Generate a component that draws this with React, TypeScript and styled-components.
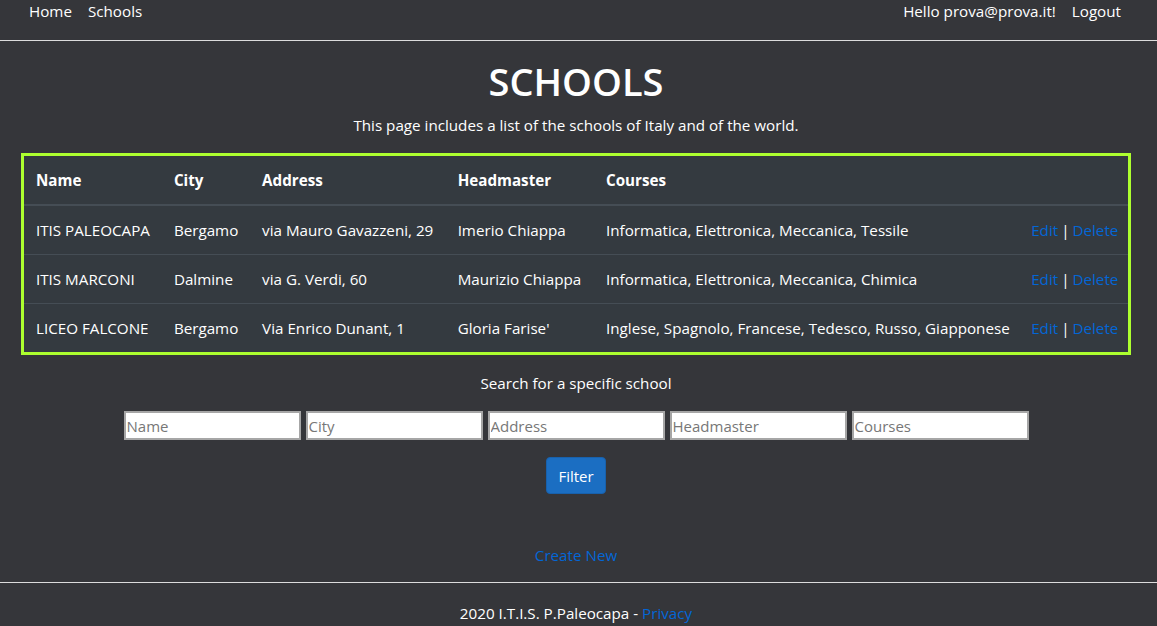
import React from "react";
import styled, { createGlobalStyle } from "styled-components";

const GlobalStyle = createGlobalStyle`
  html, body { margin: 0; padding: 0; }
  body {
    background: #35363a;
    color: #ffffff;
    font-family: "Open Sans", "Noto Sans", sans-serif;
    font-size: 15.2px;
    line-height: 24px;
    overflow: hidden;
  }
  * { box-sizing: border-box; }
`;

const Page = styled.div`
  display: flex;
  flex-direction: column;
  min-height: 626px;
`;

const Nav = styled.header`
  height: 42px;
  border-bottom: 1px solid #dcdcdc;
  display: flex;
  justify-content: space-between;
  align-items: flex-start;
  padding: 0 28px 0 21px;
  margin-top: -1px;
`;

const NavGroup = styled.nav`
  display: flex;
  gap: 0;
`;

const NavLink = styled.a`
  color: #ffffff;
  text-decoration: none;
  padding: 0 8px;
  line-height: 24px;
`;

const Main = styled.main`
  width: 1110px;
  margin-left: 21px;
  display: flex;
  flex-direction: column;
  align-items: center;
  padding-top: 16px;
`;

const Title = styled.h1`
  margin: 0 0 8px;
  font-size: 38px;
  line-height: 48px;
  font-weight: 600;
`;

const Lead = styled.p`
  margin: 0 0 16px;
`;

const Table = styled.table`
  width: 1110px;
  table-layout: fixed;
  border-collapse: collapse;
  background: #343a40;
  border: 3px solid #adff2f;
`;

const Th = styled.th`
  text-align: left;
  font-weight: 700;
  padding: 12px;
  border-bottom: 2px solid #454d55;
  white-space: nowrap;
`;

const Td = styled.td`
  padding: 12px;
  border-top: 1px solid #454d55;
  white-space: nowrap;
`;

const Link = styled.a`
  color: #0366d6;
  text-decoration: none;
`;

const Sep = styled.span`
  color: #ffffff;
  margin: 0 3px;
`;

const SearchLabel = styled.p`
  margin: 16px 0 16px;
`;

const Inputs = styled.div`
  display: flex;
  gap: 5px;
`;

const Input = styled.input`
  width: 177px;
  height: 29px;
  border: 2px solid #a6a6a6;
  background: #ffffff;
  padding: 1px 1px;
  font-family: "Open Sans", "Noto Sans", sans-serif;
  font-size: 15px;
  color: #222;
  &::placeholder { color: #777; }
`;

const Button = styled.button`
  margin-top: 17px;
  width: 60px;
  height: 37px;
  background: #1b6ec2;
  border: 1px solid #1861ac;
  border-radius: 4px;
  color: #fff;
  font-family: "Open Sans", "Noto Sans", sans-serif;
  font-size: 15px;
  padding: 0;
`;

const CreateNew = styled(Link)`
  margin-top: 49px;
  line-height: 24px;
`;

const Footer = styled.footer`
  margin-top: 15px;
  border-top: 1px solid #dcdcdc;
  line-height: 60px;
  text-align: center;
  padding-right: 5px;
`;

const cols = [139, 88, 195, 148, 424, 110];

const rows = [
  ["ITIS PALEOCAPA", "Bergamo", "via Mauro Gavazzeni, 29", "Imerio Chiappa", "Informatica, Elettronica, Meccanica, Tessile"],
  ["ITIS MARCONI", "Dalmine", "via G. Verdi, 60", "Maurizio Chiappa", "Informatica, Elettronica, Meccanica, Chimica"],
  ["LICEO FALCONE", "Bergamo", "Via Enrico Dunant, 1", "Gloria Farise'", "Inglese, Spagnolo, Francese, Tedesco, Russo, Giapponese"],
];

export default function App() {
  return (
    <>
      <GlobalStyle />
      <Page>
        <Nav>
          <NavGroup>
            <NavLink href="#">Home</NavLink>
            <NavLink href="#">Schools</NavLink>
          </NavGroup>
          <NavGroup>
            <NavLink href="#">Hello prova@prova.it!</NavLink>
            <NavLink href="#">Logout</NavLink>
          </NavGroup>
        </Nav>
        <Main>
          <Title>SCHOOLS</Title>
          <Lead>This page includes a list of the schools of Italy and of the world.</Lead>
          <Table>
            <colgroup>
              {cols.map((w, i) => (
                <col key={i} style={{ width: w }} />
              ))}
            </colgroup>
            <thead>
              <tr>
                <Th>Name</Th>
                <Th>City</Th>
                <Th>Address</Th>
                <Th>Headmaster</Th>
                <Th>Courses</Th>
                <Th></Th>
              </tr>
            </thead>
            <tbody>
              {rows.map((r) => (
                <tr key={r[0]}>
                  {r.map((c, i) => (
                    <Td key={i}>{c}</Td>
                  ))}
                  <Td>
                    <Link href="#">Edit</Link>
                    <Sep>|</Sep>
                    <Link href="#">Delete</Link>
                  </Td>
                </tr>
              ))}
            </tbody>
          </Table>
          <SearchLabel>Search for a specific school</SearchLabel>
          <Inputs>
            <Input placeholder="Name" />
            <Input placeholder="City" />
            <Input placeholder="Address" />
            <Input placeholder="Headmaster" />
            <Input placeholder="Courses" />
          </Inputs>
          <Button>Filter</Button>
          <CreateNew href="#">Create New</CreateNew>
        </Main>
        <Footer>
          2020 I.T.I.S. P.Paleocapa - <Link href="#">Privacy</Link>
        </Footer>
      </Page>
    </>
  );
}
